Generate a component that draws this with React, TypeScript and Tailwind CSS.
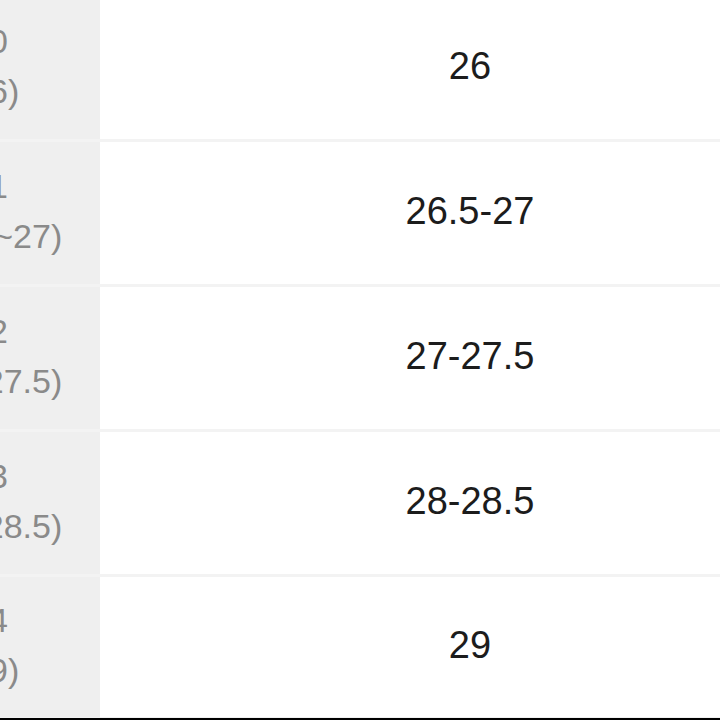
const rows = [
  { eu: '40', jp: '(26)', cm: '26' },
  { eu: '41', jp: '(26.5~27)', cm: '26.5-27' },
  { eu: '42', jp: '(27~27.5)', cm: '27-27.5' },
  { eu: '43', jp: '(28~28.5)', cm: '28-28.5' },
  { eu: '44', jp: '(29)', cm: '29' },
];

function SizeRow({ eu, jp, cm, last }: { eu: string; jp: string; cm: string; last?: boolean }) {
  return (
    <div className={`flex shrink-0 ${last ? 'h-[140px]' : 'h-[145px] border-b-[3px] border-[#f3f3f3]'}`}>
      {/* left column, mostly off screen */}
      <div className="w-[222px] shrink-0 bg-[#efefef] flex flex-col items-center justify-center text-[34px] leading-[50px] text-[#8a8a8a] pb-[4px]">
        <span>{eu}</span>
        <span>{jp}</span>
      </div>
      <div className="w-[740px] shrink-0 flex items-center justify-center text-[38px] text-[#1c1c1c] pb-[4px]">
        {cm}
      </div>
    </div>
  );
}

export default function App() {
  return (
    <div
      className="w-[720px] h-[720px] overflow-hidden bg-white flex flex-col"
      style={{ fontFamily: '"Liberation Sans", Arial, sans-serif' }}
    >
      <div className="-mt-[3px] -ml-[122px] w-[962px] flex flex-col">
        {rows.map((r, i) => (
          <SizeRow key={r.eu} {...r} last={i === rows.length - 1} />
        ))}
        <div className="h-[1px] bg-[#f1f1f1] shrink-0" />
        <div className="h-[4px] bg-black shrink-0" />
      </div>
    </div>
  );
}
